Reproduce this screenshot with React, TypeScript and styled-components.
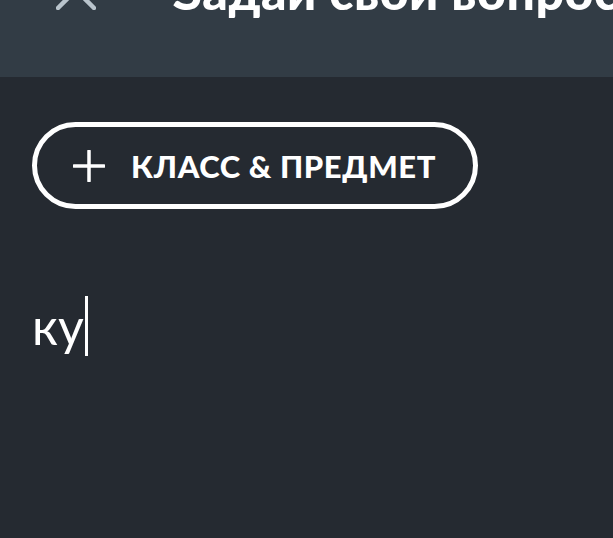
import * as React from "react";
import styled, { createGlobalStyle } from "styled-components";

const GlobalStyle = createGlobalStyle`
	html, body {
		margin: 0;
		padding: 0;
		background: #252a31;
		font-family: Lato, "Noto Sans", sans-serif;
		overflow: hidden;
	}
`;

const Page = styled.div`
	width: 613px;
	height: 538px;
	display: flex;
	flex-direction: column;
	background: #252a31;
	overflow: hidden;
`;

const Header = styled.header`
	height: 77px;
	flex-shrink: 0;
	background: #323c45;
	overflow: hidden;
`;

const TopRow = styled.div`
	display: flex;
	align-items: flex-end;
	gap: 77px;
	padding-left: 56px;
	margin-top: -30px;
	height: 40px;
`;

const CloseButton = styled.button`
	width: 40px;
	height: 40px;
	padding: 0;
	border: none;
	background: none;
	color: #b9c4cc;
	display: flex;
	flex-shrink: 0;
`;

const Title = styled.h1`
	margin: 0 0 -6px;
	font-size: 50px;
	font-weight: 900;
	letter-spacing: 0.5px;
	color: #ffffff;
	white-space: nowrap;
	line-height: 1;
`;

const Body = styled.main`
	flex: 1;
	display: flex;
	flex-direction: column;
	align-items: flex-start;
	padding: 45px 32px 0;
`;

const PillButton = styled.button`
	width: 446px;
	height: 87px;
	box-sizing: border-box;
	border: 5px solid #ffffff;
	border-radius: 44px;
	background: transparent;
	color: #ffffff;
	display: flex;
	align-items: center;
	gap: 26px;
	padding: 0 0 0 36px;
	font-family: inherit;
	font-size: 31px;
	font-weight: 900;
	letter-spacing: 0.6px;
	cursor: pointer;
`;

const Input = styled.div`
	margin-top: 87px;
	display: flex;
	align-items: center;
	font-size: 50px;
	color: #ffffff;
	line-height: 60px;
`;

const Caret = styled.span`
	display: inline-block;
	width: 3px;
	height: 60px;
	background: #ffffff;
	margin-left: 1px;
`;

const App = () => {
	return (
		<Page>
			<GlobalStyle />
			<Header>
				<TopRow>
					<CloseButton aria-label="close">
						<svg width="40" height="40" viewBox="0 0 40 40" fill="none">
							<path
								d="M2 2 L38 38 M38 2 L2 38"
								stroke="currentColor"
								strokeWidth="4.5"
								strokeLinecap="round"
							/>
						</svg>
					</CloseButton>
					<Title>Задай свой вопрос</Title>
				</TopRow>
			</Header>
			<Body>
				<PillButton>
					<svg width="32" height="32" viewBox="0 0 32 32" fill="none">
						<path
							d="M16 1 V31 M1 16 H31"
							stroke="currentColor"
							strokeWidth="3.5"
							strokeLinecap="round"
						/>
					</svg>
					<span>КЛАСС &amp; ПРЕДМЕТ</span>
				</PillButton>
				<Input>
					<span>ку</span>
					<Caret />
				</Input>
			</Body>
		</Page>
	);
};

export default App;
